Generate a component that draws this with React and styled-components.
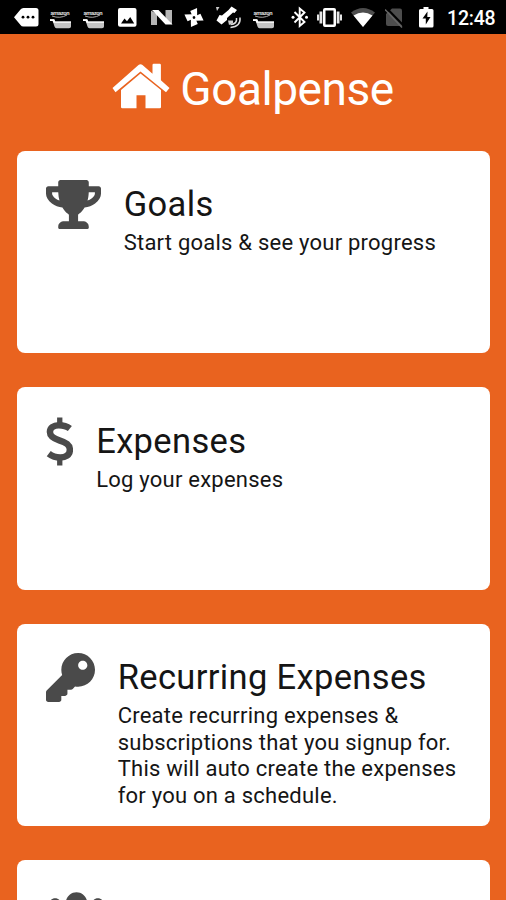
import styled, { createGlobalStyle } from 'styled-components';
import { FaTrophy, FaKey, FaUsers } from 'react-icons/fa';

const GlobalStyle = createGlobalStyle`
  * {
    box-sizing: border-box;
  }
  body {
    margin: 0;
    background-color: #e9631f;
    font-family: Roboto, "Liberation Sans", sans-serif;
  }
`;

const Screen = styled.div`
  display: flex;
  flex-direction: column;
  width: 506px;
  height: 900px;
  overflow: hidden;
  background-color: #e9631f;
`;

const StatusBar = styled.div`
  display: flex;
  flex-shrink: 0;
  height: 34px;
  padding-left: 14px;
  background-color: black;
`;

const StatusIcon = styled.svg`
  flex-shrink: 0;
  width: ${(props) => props.$width}px;
  height: 34px;
  margin-right: ${(props) => props.$space}px;
  fill: white;
`;

const Clock = styled.span`
  color: white;
  font-size: 19.5px;
  font-weight: 500;
  line-height: 37px;
  letter-spacing: -0.2px;
`;

const Header = styled.header`
  display: flex;
  flex-shrink: 0;
  justify-content: center;
  align-items: flex-start;
  gap: 10px;
  height: 117px;
  padding-top: 28px;
  color: white;
`;

const HomeIcon = styled.svg`
  width: 58px;
  height: 46px;
  margin-top: 0.5px;
  fill: white;
`;

const AppName = styled.h1`
  margin: 0;
  font-size: 46px;
  font-weight: 400;
  line-height: 54px;
  letter-spacing: -0.45px;
`;

const CardList = styled.main`
  display: flex;
  flex-direction: column;
  gap: 34px;
  padding: 0 15.7px 0 16.5px;
`;

const Card = styled.section`
  display: flex;
  flex-shrink: 0;
  align-items: flex-start;
  gap: 23px;
  height: 202.3px;
  padding: 29.3px 27px 0 29.2px;
  border-radius: 8px;
  background-color: white;
`;

const CardIcon = styled.div`
  display: flex;
  flex-shrink: 0;
  width: ${(props) => props.$width}px;
  height: 49px;
  color: #4a4a4a;
  svg {
    width: 100%;
    height: 100%;
  }
`;

const CardText = styled.div`
  padding-top: 4px;
  color: #151515;
`;

const CardTitle = styled.h2`
  margin: 0;
  font-size: 34.5px;
  font-weight: 400;
  line-height: 41px;
  letter-spacing: 0.35px;
`;

const CardDescription = styled.p`
  margin: 5px 0 0;
  font-size: 22px;
  line-height: 26.7px;
  letter-spacing: 0.23px;
`;

const Dollar = () => (
  <svg viewBox="0 0 28 49" fill="none" stroke="currentColor" strokeWidth="6.6">
    <path d="M24.300 11.300C20.500 8.300 16.500 7.900 13 7.900 7.500 7.900 4 10.600 4 14.800 4 19.300 7.500 21.300 13.500 23.300 20.500 25.600 24.300 27.800 24.300 33 24.300 38.500 20 40.800 14.500 40.800 10 40.800 6.500 39.700 2.800 36.800" />
    <path d="M14 0v7M14 41.500V49" strokeWidth="5.4" />
  </svg>
);

const cards = [
  { id: 'goals', title: 'Goals', text: 'Start goals & see your progress', Icon: FaTrophy, width: 55 },
  { id: 'expenses', title: 'Expenses', text: 'Log your expenses', Icon: Dollar, width: 27.5 },
  {
    id: 'recurring',
    title: 'Recurring Expenses',
    text: 'Create recurring expenses & subscriptions that you signup for. This will auto create the expenses for you on a schedule.',
    Icon: FaKey,
    width: 49,
  },
  { id: 'users', Icon: FaUsers, width: 61 },
];

const CartIcon = ({ space }) => (
  <StatusIcon $width={22} $space={space} viewBox="0 0 22 34">
    <text x="0.5" y="14.5" fontSize="6" fontWeight="700" textLength="19" opacity="0.85">
      amazon
    </text>
    <path d="M2 16q8 3 15-1" fill="none" stroke="#aaa" strokeWidth="1" />
    <path d="M0 19.300h4.200l1 2.200H21v5q0 1.800-2 1.800H6.500q-1.500 0-2-1.800l-1.800-5.500H0z" fill="#c4c4c4" />
    <path d="M0 19.300h4.200l1 2.200H21v1.300H3.500l-.8-1.800H0z" />
  </StatusIcon>
);

const StatusIcons = () => (
  <>
    <StatusIcon $width={25} $space={11} viewBox="0 0 25 34">
      <path d="M0 17.300 6.500 9.500Q7.500 8 9.500 8H22q2.500 0 2.500 2.500v13.500q0 2.500-2.500 2.500H9.500q-2 0-3-1.500z" />
      <g fill="black">
        <circle cx="9" cy="17.200" r="1.400" />
        <circle cx="14" cy="17.200" r="1.400" />
        <circle cx="19" cy="17.200" r="1.400" />
      </g>
    </StatusIcon>
    <CartIcon space={11} />
    <CartIcon space={13} />
    <StatusIcon $width={19} $space={14} viewBox="0 0 19 34">
      <rect x="0" y="8" width="18.500" height="18.700" rx="2" />
      <path d="M3 23.500 6.500 18.500 9 21.300 12.200 17l4 6.500z" fill="black" />
    </StatusIcon>
    <StatusIcon $width={22} $space={11} viewBox="0 0 22 34">
      <path d="M0 10.500 6 14v11H0zM14.500 10H21v14.500l-6.500-4z" fill="#b5b5b5" />
      <path d="M1 10h6.500L21.500 24.500h-7z" />
    </StatusIcon>
    <StatusIcon $width={21} $space={11} viewBox="0 0 21 34">
      {[12, 102, 192, 282].map((angle) => (
        <path
          key={angle}
          d="M-1.500-.5-5-5.500 1-10 2.800-2z"
          transform={`translate(10 17.500) rotate(${angle})`}
        />
      ))}
      <circle cx="10" cy="17.500" r="1.300" fill="black" />
    </StatusIcon>
    <StatusIcon $width={26} $space={11} viewBox="0 0 26 34">
      <path d="M0 7h3.500L1 11z" opacity="0.8" />
      <path d="M15.500 6.500 21 10l-2.500 3-1.500-.5-6 5.500 0 2-5.500 4.500-5-4 3-5.500 2.500.5 6.500-5.500z" />
      <g fill="none" stroke="#ddd" strokeWidth="1.500">
        <path d="M20.500 18q1 6-6 6.500M24 17.500q1 9-9.500 10" />
      </g>
      <path d="M12 20.500h5v2.500l-4 2z" fill="#ccc" />
    </StatusIcon>
    <CartIcon space={16} />
    <StatusIcon $width={18} $space={8} viewBox="0 0 18 34">
      <path
        d="M3.500 12 13.500 22 8.700 26V8.500l4.800 4L3.500 22.500"
        fill="none"
        stroke="white"
        strokeWidth="1.900"
      />
      <circle cx="2" cy="17.200" r="1.500" />
      <circle cx="15.500" cy="17.200" r="1.500" />
    </StatusIcon>
    <StatusIcon $width={25} $space={9} viewBox="0 0 25 34">
      <path
        fillRule="evenodd"
        d="M8 8h9q2 0 2 2v15q0 2-2 2H8q-2 0-2-2V10q0-2 2-2zM8.500 10.500v14h8v-14z"
      />
      <path d="M2.500 11.500H5.300v12H2.500zM0 14.500h2v6H0zM19.700 11.500h2.800v12h-2.800zM23 14.500h2v6h-2z" opacity="0.9" />
    </StatusIcon>
    <StatusIcon $width={24} $space={10} viewBox="0 0 24 34">
      <path d="M12 27 0 12.500Q12 3.500 24 12.500z" fill="#4d4d4d" />
      <path d="M12 27 2.500 15.500Q12 9.500 21.500 15.500z" />
    </StatusIcon>
    <StatusIcon $width={18} $space={16} viewBox="0 0 18 34">
      <path d="M7 8.500h8q2 0 2 2V26H3q-2 0-2-2V14z" fill="#4d4d4d" />
      <path d="M1 7.500 19 26" stroke="black" strokeWidth="2" />
      <path d="M0 9.500 17 27.500" stroke="#666" strokeWidth="1.500" />
    </StatusIcon>
    <StatusIcon $width={15} $space={13} viewBox="0 0 15 34">
      <path d="M4.500 7h5v2H13q1.500 0 1.500 1.500V26q0 1.500-1.500 1.500H1.500Q0 27.500 0 26V10.500Q0 9 1.500 9h3z" />
      <path d="M8.500 11.500 3.500 18.500h3.300v6L11.500 17H8.300z" fill="black" />
    </StatusIcon>
  </>
);

const App = () => {
  return (
    <>
      <GlobalStyle />
      <Screen>
        <StatusBar>
          <StatusIcons />
          <Clock>12:48</Clock>
        </StatusBar>
        <Header>
          <HomeIcon viewBox="0 0 58 46">
            <path d="M.5 25 26.500 2q2-1.500 4 0l10 8.700V2q0-1.200 1.200-1.200h6q1.200 0 1.200 1.200v15.300L57.500 25 54 29.300 28.500 8.500 3.500 29.300z" />
            <path d="M9 27 28.500 10.600 49 27v17q0 1.300-1.300 1.300H33.500v-13h-9v13H10.300Q9 45.300 9 44z" />
          </HomeIcon>
          <AppName>Goalpense</AppName>
        </Header>
        <CardList>
          {cards.map(({ id, title, text, Icon, width }) => (
            <Card key={id}>
              <CardIcon $width={width}>
                <Icon />
              </CardIcon>
              {title && (
                <CardText>
                  <CardTitle>{title}</CardTitle>
                  <CardDescription>{text}</CardDescription>
                </CardText>
              )}
            </Card>
          ))}
        </CardList>
      </Screen>
    </>
  );
};

export default App;
